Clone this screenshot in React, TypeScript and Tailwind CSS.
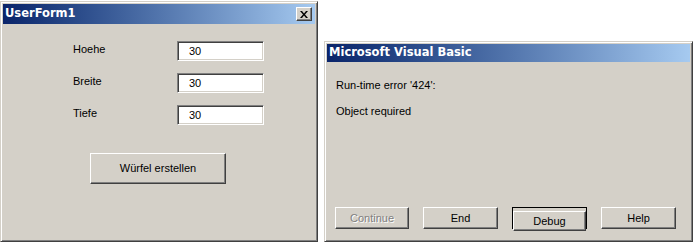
const raised =
  "border border-t-[#d4d0c8] border-l-[#d4d0c8] border-r-[#404040] border-b-[#404040] shadow-[inset_1px_1px_0_#ffffff,inset_-1px_-1px_0_#808080]";
const btn =
  "border border-t-[#ffffff] border-l-[#ffffff] border-r-[#404040] border-b-[#404040] shadow-[inset_-1px_-1px_0_#808080] bg-[#d4d0c8]";
const sunken =
  "border border-t-[#808080] border-l-[#808080] border-r-[#ffffff] border-b-[#ffffff] shadow-[inset_1px_1px_0_#404040,inset_-1px_-1px_0_#d4d0c8] bg-white";

const fields = [
  { label: "Hoehe", value: "30" },
  { label: "Breite", value: "30" },
  { label: "Tiefe", value: "30" },
];

function TitleBar({ title, height, children }: { title: string; height: string; children?: React.ReactNode }) {
  return (
    <div
      className={`flex items-center justify-between ${height} bg-gradient-to-r from-[#0a246a] to-[#a6caf0] pl-[2px] pr-[2px]`}
    >
      <span className="text-[11.5px] font-bold text-white font-['DejaVu_Sans',sans-serif] leading-none">
        {title}
      </span>
      {children}
    </div>
  );
}

function CloseButton() {
  return (
    <div className={`flex items-center justify-center w-[16px] h-[14px] ${btn} mr-[1px]`}>
      <svg width="8" height="7" viewBox="0 0 8 7">
        <path d="M0 0 L2 0 L4 2.5 L6 0 L8 0 L5 3.5 L8 7 L6 7 L4 4.5 L2 7 L0 7 L3 3.5 Z" fill="#000" />
      </svg>
    </div>
  );
}

function UserForm() {
  return (
    <div className={`mt-px w-[318px] h-[241px] bg-[#d4d0c8] p-px ${raised} shrink-0`}>
      <div className="p-px">
        <TitleBar title="UserForm1" height="h-[20px]">
          <CloseButton />
        </TitleBar>
      </div>
      <div className="flex flex-col gap-3 pt-[16px] pl-[71px]">
        {fields.map((f) => (
          <div key={f.label} className="flex items-start">
            <span className="w-[104px] text-[11px] leading-[14px] pt-px text-black">{f.label}</span>
            <div className={`w-[87px] h-[20px] ${sunken} flex items-center pl-[11px] text-[11px] text-black`}>
              {f.value}
            </div>
          </div>
        ))}
      </div>
      <div className="pl-[88px] pt-[28px]">
        <button className={`w-[136px] h-[31px] ${btn} text-[11px] text-black`}>Würfel erstellen</button>
      </div>
    </div>
  );
}

function ErrorDialog() {
  return (
    <div className={`mt-[41px] w-[369px] h-[201px] bg-[#d4d0c8] p-px ${raised} shrink-0 flex flex-col`}>
      <div className="p-px">
        <TitleBar title="Microsoft Visual Basic" height="h-[18px]" />
      </div>
      <div className="pl-[10px] pt-[15px] text-[11px] text-black leading-[14px]">
        <p>Run-time error '424':</p>
        <p className="mt-[12px]">Object required</p>
      </div>
      <div className="mt-auto mb-[11px] pl-[9px] flex gap-[14px]">
        <button className={`w-[74px] h-[22px] ${btn} text-[11px] text-[#808080] [text-shadow:1px_1px_0_#ffffff]`}>
          Continue
        </button>
        <button className={`w-[75px] h-[22px] ${btn} text-[11px] text-black`}>End</button>
        <div className="w-[75px] h-[22px] border border-black">
          <button className={`w-full h-full ${btn} text-[11px] text-black`}>Debug</button>
        </div>
        <button className={`w-[75px] h-[22px] ${btn} text-[11px] text-black`}>Help</button>
      </div>
    </div>
  );
}

export default function App() {
  return (
    <div className="w-[696px] h-[246px] bg-white flex items-start gap-[6px] overflow-hidden font-['Liberation_Sans',Arial,sans-serif]">
      <UserForm />
      <ErrorDialog />
    </div>
  );
}
